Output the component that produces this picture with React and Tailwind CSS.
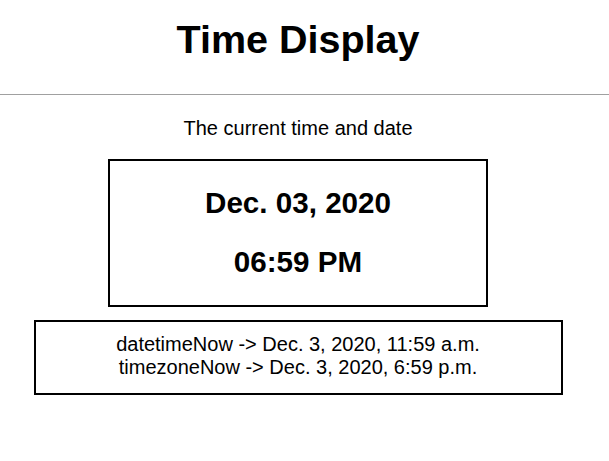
export default function App() {
  const dateLabel = "Dec. 03, 2020";
  const timeLabel = "06:59 PM";

  return (
    <div className="w-full min-h-[461px] bg-white text-black font-['Liberation_Sans',Arial,sans-serif]">
      {/* HEADER */}
      <header className="pt-[17px] pb-[32px] border-b border-[#a0a0a0]">
        <h1 className="w-[596px] text-center text-[39.5px] leading-[45px] font-bold">Time Display</h1>
      </header>

      <main className="w-[596px] flex flex-col items-center">
        <p className="mt-[22px] text-[20px] leading-[23px]">The current time and date</p>

        {/* CLOCK */}
        <div className="mt-[19px] w-[380px] border-2 border-black pt-[25px] pb-[26px] flex flex-col items-center gap-[25px]">
          <h2 className="text-[29.6px] leading-[34px] font-bold">{dateLabel}</h2>
          <h2 className="text-[29.6px] leading-[34px] font-bold">{timeLabel}</h2>
        </div>

        {/* DEBUG */}
        <div className="mt-[13px] w-[529px] border-2 border-black pt-[11px] pb-[14px] text-center text-[20px] leading-[23px]">
          <div>datetimeNow -&gt; Dec. 3, 2020, 11:59 a.m.</div>
          <div>timezoneNow -&gt; Dec. 3, 2020, 6:59 p.m.</div>
        </div>
      </main>
    </div>
  );
}
